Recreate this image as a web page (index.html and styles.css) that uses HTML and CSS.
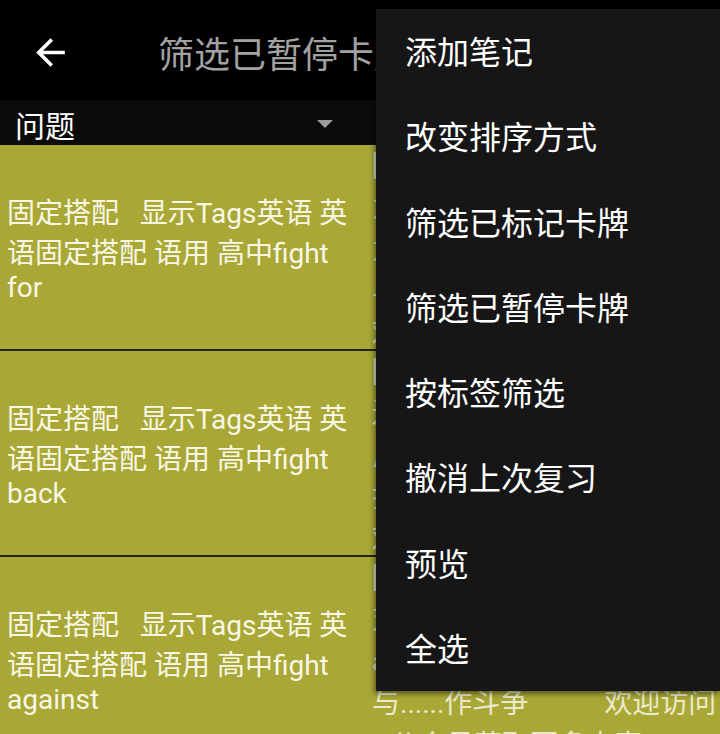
FILE: index.html
```html
<!DOCTYPE html>
<html lang="zh-CN">
<head>
<meta charset="utf-8">
<title>筛选已暂停卡牌</title>
<link rel="stylesheet" href="styles.css">
</head>
<body>
<div class="screen">
  <header class="toolbar">
    <svg class="back" viewBox="0 0 24 24" width="43" height="43"><path fill="#ffffff" d="M20 11H7.830l5.59-5.59L12 4l-8 8 8 8 1.41-1.41L7.83 13H20v-2z"/></svg>
    <h1 class="title">筛选已暂停卡牌</h1>
  </header>
  <div class="subbar">
    <div class="spinner"><span>问题</span><span class="caret"></span></div>
    <div class="spinner"><span>答案</span><span class="caret"></span></div>
  </div>
  <div class="list">
    <div class="row">
      <div class="cell q"><p>固定搭配&nbsp;&nbsp; 显示Tags英语 英语固定搭配 语用 高中fight for</p></div>
      <div class="cell a"><p>[fight for]<br>为……而战<br>为……而斗争<br>与……一起<br>欢迎访问</p></div>
    </div>
    <div class="row">
      <div class="cell q"><p>固定搭配&nbsp;&nbsp; 显示Tags英语 英语固定搭配 语用 高中fight back</p></div>
      <div class="cell a"><p>[fight back]<br>还击；抵抗<br>反击<br>抑制<br>欢迎访问</p></div>
    </div>
    <div class="row">
      <div class="cell q"><p>固定搭配&nbsp;&nbsp; 显示Tags英语 英语固定搭配 语用 高中fight against</p></div>
      <div class="cell a"><p>[fight against]<br>对抗<br>against<br>与......作斗争<span class="gap"></span>欢迎访问<br>tt公众号获取更多内容</p></div>
    </div>
  </div>
  <ul class="menu">
    <li>添加笔记</li>
    <li>改变排序方式</li>
    <li>筛选已标记卡牌</li>
    <li>筛选已暂停卡牌</li>
    <li>按标签筛选</li>
    <li>撤消上次复习</li>
    <li>预览</li>
    <li>全选</li>
  </ul>
</div>
</body>
</html>
```
FILE: styles.css
```css
* { box-sizing: border-box; }
html, body { margin: 0; padding: 0; background: #000; }
body { font-family: Roboto, "Noto Sans CJK SC", sans-serif; }

.screen {
  position: relative;
  width: 720px;
  height: 734px;
  overflow: hidden;
  background: #000;
}

.toolbar {
  height: 100px;
  display: flex;
  align-items: center;
  padding-top: 4px;
  background: #000;
  white-space: nowrap;
}
.back { margin-left: 29px; flex: none; }
.title {
  margin: 0 0 0 86px;
  font-weight: 400;
  font-size: 36px;
  color: #a2a2a2;
  font-family: "Noto Sans CJK SC", sans-serif;
}

.subbar {
  height: 45px;
  display: grid;
  grid-template-columns: 360px 360px;
  background: #0b0b0b;
}
.spinner {
  display: flex;
  align-items: center;
  justify-content: space-between;
  padding: 2px 27px 0 15px;
  font-size: 30px;
  color: #fff;
  font-family: "Noto Sans CJK SC", sans-serif;
}
.caret {
  width: 0;
  height: 0;
  border-left: 8.5px solid transparent;
  border-right: 8.5px solid transparent;
  border-top: 8px solid #9c9c9c;
}

.list { background: #a9a836; }
.row {
  display: grid;
  grid-template-columns: 360px 360px;
  height: 206px;
  border-bottom: 2px solid #24240f;
}
.cell { background: #a9a836; overflow: hidden; }
.cell p { margin: 0; }
.q {
  display: flex;
  align-items: center;
  padding: 0 0 0 7px;
  font-size: 28px;
  color: #f8f7e6;
}
.a {
  padding: 0 0 0 12px;
  font-size: 28px;
  line-height: 42px;
  color: #ebeacc;
  white-space: nowrap;
}
.gap { display: inline-block; width: 76px; }

.menu {
  position: absolute;
  top: 9px;
  left: 376px;
  right: 0;
  height: 682px;
  margin: 0;
  padding: 0;
  list-style: none;
  background: #161616;
  box-shadow: -1px 2px 6px rgba(0, 0, 0, 0.6);
  display: flex;
  flex-direction: column;
}
.menu li {
  flex: 1;
  display: flex;
  align-items: center;
  padding: 0 0 3px 29px;
  font-size: 32px;
  color: #fff;
  font-family: "Noto Sans CJK SC", sans-serif;
}
```
